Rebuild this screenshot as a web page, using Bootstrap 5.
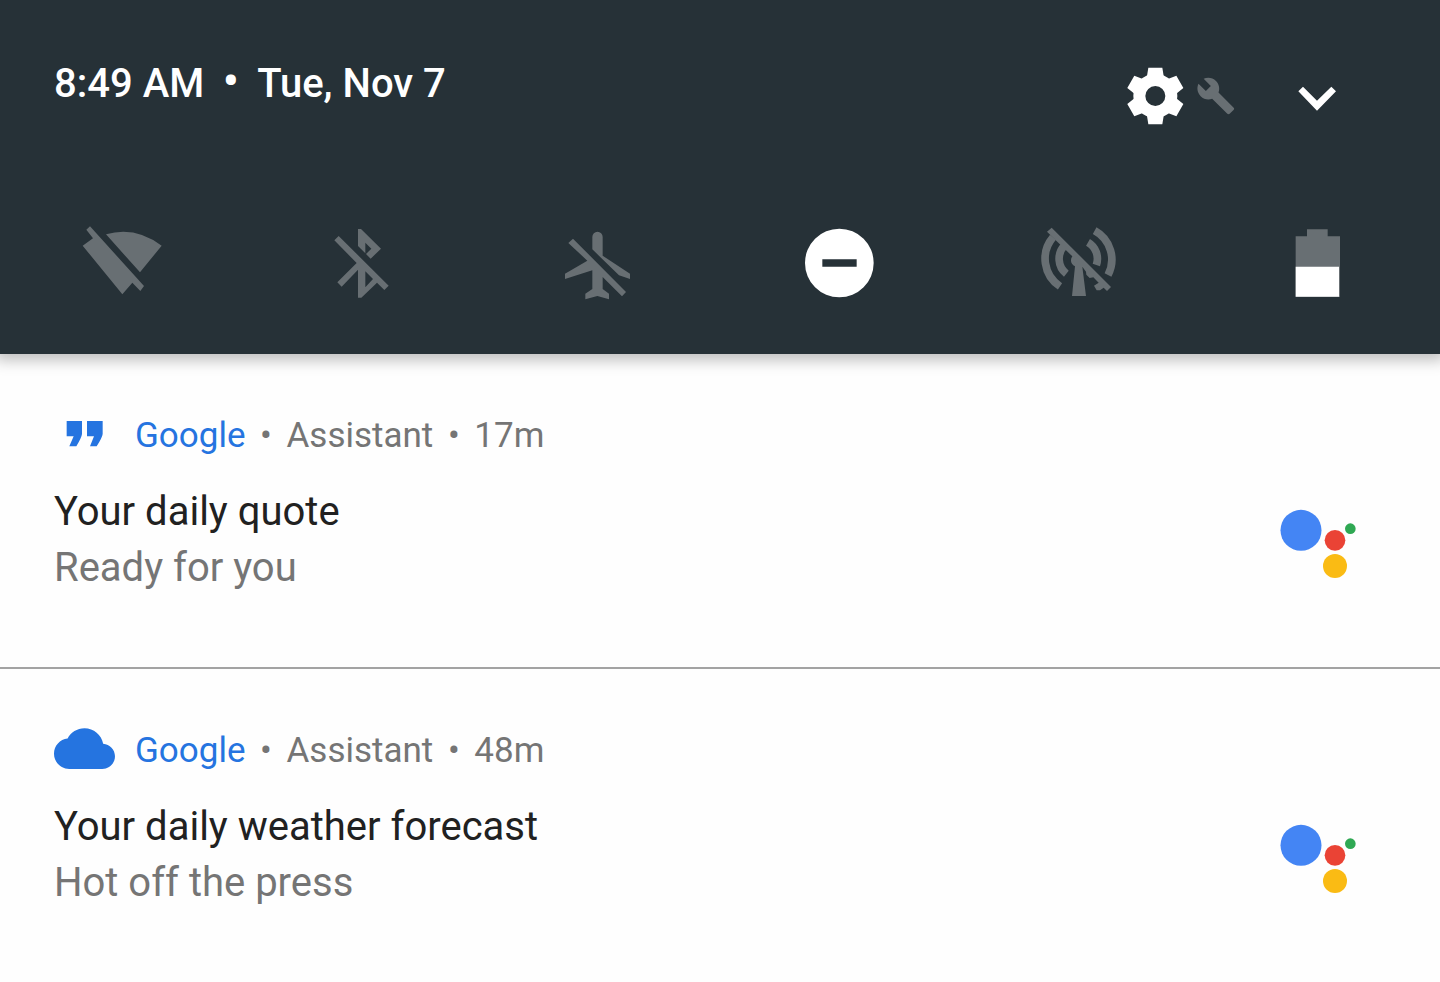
<!DOCTYPE html>
<html lang="en">
<head>
<meta charset="utf-8">
<meta name="viewport" content="width=device-width, initial-scale=1">
<title>Notifications</title>
<link href="https://cdn.jsdelivr.net/npm/bootstrap@5.3.0/dist/css/bootstrap.min.css" rel="stylesheet">
<style>
body{font-family:Roboto,"Noto Sans",sans-serif;background:#fefefe;color:#212121}
svg{display:block}
.shade{background:#263137;color:#fff;padding:60px 0 44px;box-shadow:0 1px 14px 5px rgba(0,0,0,.26);position:relative}
.status-row{padding:0 98px 0 54px;margin-bottom:89px}
.clock{font-size:40px;line-height:48px;font-weight:500}
.sep{display:inline-block;width:53px;text-align:center;font-size:46px;line-height:40px}
.actions{height:60px;margin-top:6px}
.icon-btn{background:none;border:0;padding:0;color:#fff}
.off{color:#686f73}
.tiles{padding:0 65px 0 70px}
.note{padding:58px 83px 71px 54px}
.note + .note{border-top:2px solid #a3a3a3}
.meta{font-size:35px;line-height:48px;color:#757575;margin-bottom:24px}
.meta .sep{width:41px;font-size:35px}
.app-icon{width:62px;color:#2574e0;margin-right:19px}
.app-name{color:#2574e0;text-decoration:none}
.note h2,.note p{font-size:40px;line-height:56px;font-weight:400;margin:0}
.note p{color:#757575}
.assistant{margin-top:25px}
</style>
</head>
<body>
<header class="shade">
  <div class="status-row d-flex justify-content-between align-items-start">
    <div class="clock"><time>8:49 AM</time><span class="sep">•</span><time>Tue, Nov 7</time></div>
    <div class="actions d-flex align-items-center">
      <button type="button" class="icon-btn" aria-label="Settings">
        <svg width="60" height="60" viewBox="-88 -90 180 180" fill="currentColor">
          <circle r="48" fill="none" stroke="currentColor" stroke-width="36"/>
          <path id="tooth" d="M-27-50L-25-60-21-85H21L25-60 27-50Z"/>
          <use href="#tooth" transform="rotate(60)"/><use href="#tooth" transform="rotate(120)"/><use href="#tooth" transform="rotate(180)"/><use href="#tooth" transform="rotate(240)"/><use href="#tooth" transform="rotate(300)"/>
        </svg>
      </button>
      <svg class="off ms-2 me-5" width="42" height="40" viewBox="-1 0 25 24" fill="currentColor" aria-hidden="true"><path d="M22.7 19l-9.1-9.1c.9-2.3.4-5-1.5-6.9-2-2-5-2.4-7.4-1.3L9 6 6 9 1.6 4.7C.4 7.1.9 10.1 2.9 12.1c1.9 1.9 4.6 2.4 6.9 1.5l9.1 9.1c.4.4 1 .4 1.4 0l2.3-2.3c.5-.4.5-1.1.1-1.4z"/></svg>
      <button type="button" class="icon-btn ms-2" aria-label="Expand">
        <svg width="50" height="50" viewBox="547 63 150 150" fill="currentColor"><path d="M566 124l14-14 42 42 43-42 14 14-57 58z"/></svg>
      </button>
    </div>
  </div>
  <div class="tiles d-flex justify-content-between">
    <button type="button" class="icon-btn off" aria-label="Wi-Fi off">
      <svg width="110" height="95" viewBox="0 0 330 285" fill="currentColor"><path d="M49 44L60 34 222 213 211 228 187 203 157 238 38 92 69 70ZM108 58Q195 32 275 92L210 172Z"/></svg>
    </button>
    <button type="button" class="icon-btn off" aria-label="Bluetooth off">
      <svg width="110" height="95" viewBox="-3 0 330 285" fill="currentColor" fill-rule="evenodd"><path d="M73 76L86 63 236 212 223 225 201 203 154 248H144V164L95 215 82 202 140 144ZM166 169V217L189 192ZM144 42H153L213 101 182 131 168 117 184 101 166 83V115L144 93Z"/></svg>
    </button>
    <button type="button" class="icon-btn off" aria-label="Airplane mode off">
      <svg width="110" height="95" viewBox="9 0 330 285" fill="currentColor"><path d="M142 103V66a15.500 15.500 0 0 1 31 0V122L255 176V192L222 181ZM70 84L84 71 243 231 231 244 173 186V222L192 236V253L157 243 121 253V236L142 222V166L60 192V176L127 137Z"/></svg>
    </button>
    <button type="button" class="icon-btn" aria-label="Do not disturb">
      <svg width="110" height="95" viewBox="6 0 330 285" fill="currentColor" fill-rule="evenodd"><path d="M60 144a103 103 0 0 1 206 0a103 103 0 0 1-206 0ZM112 133V155H215V133Z"/></svg>
    </button>
    <button type="button" class="icon-btn off" aria-label="Hotspot off">
      <svg width="110" height="95" viewBox="3 0 330 285" fill="currentColor">
        <g fill="none" stroke="currentColor" stroke-width="23"><path d="M84 67A99 99 0 0 0 105 214M118 92A57 57 0 0 0 124 176M209 47A99 99 0 0 1 249 180M189 82A57 57 0 0 1 214 150"/></g>
        <path d="M66 50L80 38 258 216 246 228 236 218 225 226 215 226 207 212 221 203 205 187 194 189 184 179 183 170 172 155 183 243H141L150 154C138 148 134 136 142 124Z"/>
      </svg>
    </button>
    <button type="button" class="icon-btn" aria-label="Battery">
      <svg width="110" height="95" viewBox="0 0 330 285"><path class="off" fill="currentColor" d="M126 43H188V64H225V246H92V64H126Z"/><path fill="#fff" d="M92 155H222V245H92Z"/></svg>
    </button>
  </div>
</header>
<main>
  <article class="note">
    <div class="meta d-flex align-items-start">
      <svg class="app-icon" height="42" viewBox="42 216 186 126" fill="currentColor" aria-hidden="true"><path d="M80 243H126V282Q125 292 109 319H88L101 289H80ZM141 243H188V282Q187 292 170 319H150L162 289H141Z"/></svg>
      <div><a class="app-name" href="#">Google</a><span class="sep">•</span>Assistant<span class="sep">•</span>17m</div>
    </div>
    <div class="d-flex justify-content-between align-items-start">
      <div><h2>Your daily quote</h2><p>Ready for you</p></div>
      <svg class="assistant" width="77" height="70" viewBox="60 57 231 210" role="img" aria-label="Google Assistant"><circle cx="123" cy="121" r="61.500" fill="#4485f4"/><circle cx="225" cy="151" r="31" fill="#ea4335"/><circle cx="225" cy="228" r="36" fill="#fabb14"/><circle cx="271" cy="116" r="16" fill="#2fa853"/></svg>
    </div>
  </article>
  <article class="note">
    <div class="meta d-flex align-items-start">
      <svg class="app-icon" height="42" viewBox="0 3.500 24.400 16.500" fill="currentColor" aria-hidden="true"><path d="M19.350 10.040C18.670 6.590 15.640 4 12 4 9.110 4 6.600 5.640 5.350 8.040 2.340 8.360 0 10.910 0 14c0 3.310 2.690 6 6 6h13c2.760 0 5-2.240 5-5 0-2.640-2.050-4.780-4.650-4.960z"/></svg>
      <div><a class="app-name" href="#">Google</a><span class="sep">•</span>Assistant<span class="sep">•</span>48m</div>
    </div>
    <div class="d-flex justify-content-between align-items-start">
      <div><h2>Your daily weather forecast</h2><p>Hot off the press</p></div>
      <svg class="assistant" width="77" height="70" viewBox="60 57 231 210" role="img" aria-label="Google Assistant"><circle cx="123" cy="121" r="61.500" fill="#4485f4"/><circle cx="225" cy="151" r="31" fill="#ea4335"/><circle cx="225" cy="228" r="36" fill="#fabb14"/><circle cx="271" cy="116" r="16" fill="#2fa853"/></svg>
    </div>
  </article>
</main>
<script src="https://cdn.jsdelivr.net/npm/bootstrap@5.3.0/dist/js/bootstrap.bundle.min.js"></script>
</body>
</html>
